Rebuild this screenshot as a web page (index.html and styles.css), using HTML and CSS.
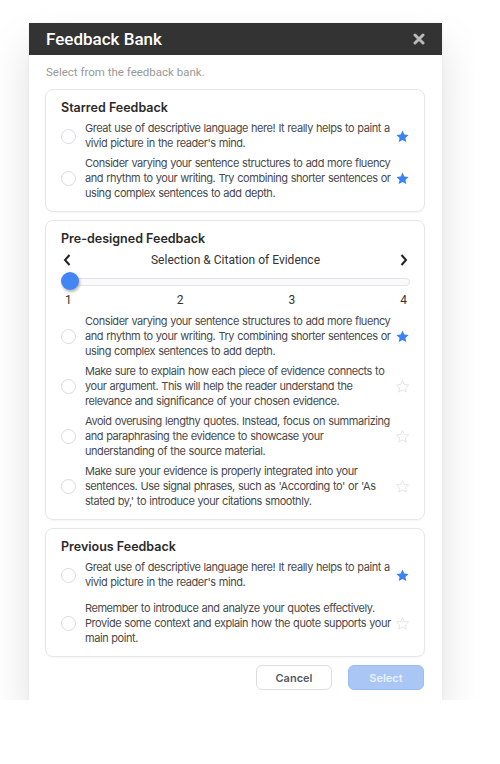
FILE: index.html
```html
<!DOCTYPE html>
<html lang="en">
<head>
  <meta charset="UTF-8" />
  <meta name="viewport" content="width=device-width, initial-scale=1.0" />
  <title>Feedback Bank</title>
  <link rel="stylesheet" href="styles.css">
</head>
<body>
  <div class="modal">
    <header class="modal-header">
      <span class="modal-title">Feedback Bank</span>
      <svg class="btn-cerrar" width="12" height="12" viewBox="0 0 12 12">
        <path d="M2 2L10 10M10 2L2 10" stroke="#b9b9b9" stroke-width="3" stroke-linecap="round"/>
      </svg>
    </header>

    <div class="modal-body">
      <div class="subtitulo">Select from the feedback bank.</div>

      <section class="tarjeta">
        <h3>Starred Feedback</h3>
        <div class="item">
          <span class="radio"></span>
          <p>Great use of descriptive language here! It really helps to paint a vivid picture in the reader's mind.</p>
          <svg class="estrella llena" viewBox="0 0 24 24"><path d="M12 2.5l2.9 6.2 6.8.8-5 4.7 1.3 6.7L12 17.6l-6 3.3 1.3-6.7-5-4.7 6.8-.8z"/></svg>
        </div>
        <div class="item">
          <span class="radio"></span>
          <p>Consider varying your sentence structures to add more fluency and rhythm to your writing. Try combining shorter sentences or using complex sentences to add depth.</p>
          <svg class="estrella llena" viewBox="0 0 24 24"><path d="M12 2.5l2.9 6.2 6.8.8-5 4.7 1.3 6.7L12 17.6l-6 3.3 1.3-6.7-5-4.7 6.8-.8z"/></svg>
        </div>
      </section>

      <section class="tarjeta">
        <h3>Pre-designed Feedback</h3>
        <div class="nav-categoria">
          <svg width="10" height="14" viewBox="0 0 10 14"><path d="M7.5 2L3 7l4.5 5" fill="none" stroke="#222" stroke-width="2"/></svg>
          <span>Selection &amp; Citation of Evidence</span>
          <svg width="10" height="14" viewBox="0 0 10 14"><path d="M2.5 2L7 7l-4.5 5" fill="none" stroke="#222" stroke-width="2"/></svg>
        </div>
        <div class="slider">
          <div class="pista"></div>
          <div class="perilla"></div>
        </div>
        <div class="numeros">
          <span>1</span><span>2</span><span>3</span><span>4</span>
        </div>
        <div class="item">
          <span class="radio"></span>
          <p>Consider varying your sentence structures to add more fluency and rhythm to your writing. Try combining shorter sentences or using complex sentences to add depth.</p>
          <svg class="estrella llena" viewBox="0 0 24 24"><path d="M12 2.5l2.9 6.2 6.8.8-5 4.7 1.3 6.7L12 17.6l-6 3.3 1.3-6.7-5-4.7 6.8-.8z"/></svg>
        </div>
        <div class="item">
          <span class="radio"></span>
          <p>Make sure to explain how each piece of evidence connects to your argument. This will help the reader understand the relevance and significance of your chosen evidence.</p>
          <svg class="estrella vacia" viewBox="0 0 24 24"><path d="M12 2.5l2.9 6.2 6.8.8-5 4.7 1.3 6.7L12 17.6l-6 3.3 1.3-6.7-5-4.7 6.8-.8z"/></svg>
        </div>
        <div class="item">
          <span class="radio"></span>
          <p>Avoid overusing lengthy quotes. Instead, focus on summarizing and paraphrasing the evidence to showcase your understanding of the source material.</p>
          <svg class="estrella vacia" viewBox="0 0 24 24"><path d="M12 2.5l2.9 6.2 6.8.8-5 4.7 1.3 6.7L12 17.6l-6 3.3 1.3-6.7-5-4.7 6.8-.8z"/></svg>
        </div>
        <div class="item">
          <span class="radio"></span>
          <p>Make sure your evidence is properly integrated into your sentences. Use signal phrases, such as 'According to' or 'As stated by,' to introduce your citations smoothly.</p>
          <svg class="estrella vacia" viewBox="0 0 24 24"><path d="M12 2.5l2.9 6.2 6.8.8-5 4.7 1.3 6.7L12 17.6l-6 3.3 1.3-6.7-5-4.7 6.8-.8z"/></svg>
        </div>
      </section>

      <section class="tarjeta tarjeta-previa">
        <h3>Previous Feedback</h3>
        <div class="item">
          <span class="radio"></span>
          <p>Great use of descriptive language here! It really helps to paint a vivid picture in the reader's mind.</p>
          <svg class="estrella llena" viewBox="0 0 24 24"><path d="M12 2.5l2.9 6.2 6.8.8-5 4.7 1.3 6.7L12 17.6l-6 3.3 1.3-6.7-5-4.7 6.8-.8z"/></svg>
        </div>
        <div class="item">
          <span class="radio"></span>
          <p>Remember to introduce and analyze your quotes effectively. Provide some context and explain how the quote supports your main point.</p>
          <svg class="estrella vacia" viewBox="0 0 24 24"><path d="M12 2.5l2.9 6.2 6.8.8-5 4.7 1.3 6.7L12 17.6l-6 3.3 1.3-6.7-5-4.7 6.8-.8z"/></svg>
        </div>
      </section>

      <div class="acciones">
        <button class="btn btn-cancelar">Cancel</button>
        <button class="btn btn-seleccionar">Select</button>
      </div>
    </div>
  </div>
</body>
</html>
```

FILE: styles.css
```css
body {
  margin: 0;
  padding: 23px 0 0 29px;
  font-family: Inter, 'Noto Sans', sans-serif;
  background-color: #fff;
  color: #333;
}

.modal {
  width: 413px;
  background-color: #fff;
  box-shadow: 0 22px 40px rgba(0, 0, 0, 0.13), 0 0 3px rgba(0, 0, 0, 0.05);
}

.modal-header {
  height: 32px;
  background-color: #333;
  display: flex;
  align-items: center;
  justify-content: space-between;
  padding: 0 17px;
}

.modal-title {
  font-family: Roboto, sans-serif;
  font-size: 17px;
  font-weight: 500;
  color: #fff;
}

.modal-body {
  padding: 10px 17px 10px 16px;
}

.subtitulo {
  font-family: Roboto, sans-serif;
  font-size: 11.5px;
  color: #999;
  margin: 0 0 9px 1px;
  line-height: 15px;
}

.tarjeta {
  border: 1px solid #e6e6e9;
  border-radius: 8px;
  padding: 9px 14px 10px 14px;
  margin-bottom: 8px;
  box-shadow: 0 1px 2px rgba(0, 0, 0, 0.04);
}

.tarjeta h3 {
  margin: 0 0 4px 1px;
  font-size: 12.5px;
  font-weight: 600;
  color: #2a2a2a;
  line-height: 18px;
}

.item {
  display: flex;
  align-items: center;
  margin-bottom: 5px;
}

.item:last-child {
  margin-bottom: 0;
}

.tarjeta-previa .item {
  margin-bottom: 11px;
}

.tarjeta-previa .item:last-child {
  margin-bottom: 0;
}

.radio {
  flex: 0 0 auto;
  width: 13px;
  height: 13px;
  border: 1px solid #d9dbe3;
  border-radius: 50%;
  margin: 0 9px 0 1px;
}

.item p {
  flex: 1;
  margin: 0;
  font-size: 11px;
  letter-spacing: -0.45px;
  word-spacing: 0.5px;
  line-height: 15px;
  color: #4a4a4a;
}

.estrella {
  flex: 0 0 auto;
  width: 15px;
  height: 15px;
  margin-left: 3px;
}

.estrella.llena {
  fill: #3b82f6;
}

.estrella.vacia {
  fill: none;
  stroke: #dfe1e6;
  stroke-width: 1.4;
}

.nav-categoria {
  display: flex;
  align-items: center;
  justify-content: space-between;
  font-family: Roboto, sans-serif;
  font-size: 12px;
  color: #333;
  margin: 2px 1px 0 2px;
  height: 16px;
}

.slider {
  position: relative;
  height: 22px;
  margin: 2px 0 0 1px;
}

.pista {
  position: absolute;
  left: 2px;
  right: 0;
  top: 8px;
  height: 6px;
  border: 1px solid #e4e4e8;
  border-radius: 4px;
  background-color: #fafafa;
}

.perilla {
  position: absolute;
  left: 0;
  top: 2px;
  width: 18px;
  height: 18px;
  border-radius: 50%;
  background-color: #4285f4;
  box-shadow: 1px 2px 3px rgba(0, 0, 0, 0.3);
}

.numeros {
  display: flex;
  justify-content: space-between;
  font-family: Roboto, sans-serif;
  font-size: 12px;
  color: #333;
  margin: 0 3px 6px 5px;
  line-height: 16px;
}

.acciones {
  display: flex;
  justify-content: flex-end;
  gap: 16px;
  margin-top: 1px;
  padding-right: 1px;
}

.btn {
  width: 76px;
  height: 25px;
  border-radius: 6px;
  font-family: Inter, sans-serif;
  font-size: 11px;
  font-weight: 600;
  cursor: pointer;
}

.btn-cancelar {
  background-color: #fff;
  border: 1px solid #dcdde3;
  color: #555b66;
}

.btn-seleccionar {
  background-color: #a9c6f5;
  border: 1px solid #9bbcf3;
  color: #eaf1fd;
}
```
